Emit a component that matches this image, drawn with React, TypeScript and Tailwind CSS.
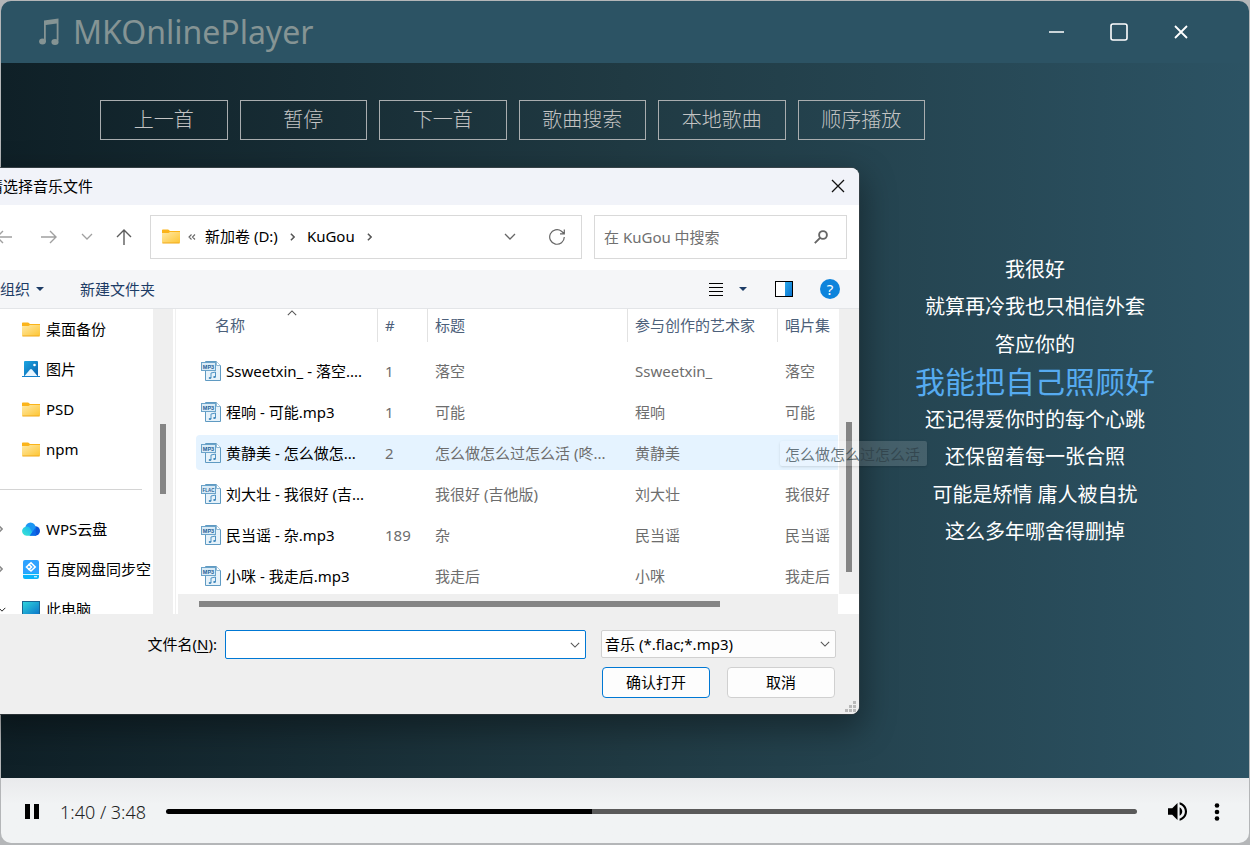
import { useState } from "react";
import type { ReactNode } from "react";

const controls = ["上一首", "暂停", "下一首", "歌曲搜索", "本地歌曲", "顺序播放"];

const lyrics = [
  "我很好",
  "就算再冷我也只相信外套",
  "答应你的",
  "我能把自己照顾好",
  "还记得爱你时的每个心跳",
  "还保留着每一张合照",
  "可能是矫情 庸人被自扰",
  "这么多年哪舍得删掉",
];
const currentLyric = 3;

const files = [
  { type: "MP3", name: "Ssweetxin_ - 落空....", no: "1", title: "落空", artist: "Ssweetxin_", album: "落空" },
  { type: "MP3", name: "程响 - 可能.mp3", no: "1", title: "可能", artist: "程响", album: "可能" },
  { type: "MP3", name: "黄静美 - 怎么做怎...", no: "2", title: "怎么做怎么过怎么活 (咚...", artist: "黄静美", album: "" },
  { type: "FLAC", name: "刘大壮 - 我很好 (吉...", no: "", title: "我很好 (吉他版)", artist: "刘大壮", album: "我很好" },
  { type: "MP3", name: "民当谣 - 杂.mp3", no: "189", title: "杂", artist: "民当谣", album: "民当谣" },
  { type: "MP3", name: "小咪 - 我走后.mp3", no: "", title: "我走后", artist: "小咪", album: "我走后" },
];
const hoveredFile = 2;

const duration = 228;

function formatTime(seconds: number) {
  return `${Math.floor(seconds / 60)}:${String(seconds % 60).padStart(2, "0")}`;
}

function Chevron({ className, d = "M1 1l5 5 5-5" }: { className?: string; d?: string }) {
  return (
    <svg viewBox="0 0 12 7" className={className} fill="none" stroke="currentColor" strokeWidth="1.3">
      <path d={d} />
    </svg>
  );
}

function ChevronRight({ className }: { className?: string }) {
  return (
    <svg viewBox="0 0 6 10" className={className} fill="none" stroke="currentColor" strokeWidth="1.9">
      <path d="M1 1l4 4-4 4" />
    </svg>
  );
}

function Caret() {
  return (
    <svg viewBox="0 0 8 4" className="h-1 w-2" fill="currentColor">
      <path d="M0 0h8L4 4z" />
    </svg>
  );
}

function Folder() {
  return (
    <svg viewBox="0 0 18 15" className="h-[15px] w-[18px] shrink-0">
      <defs>
        <linearGradient id="folder" x1="0" y1="0" x2="1" y2="1">
          <stop offset="0" stopColor="#ffe9a6" />
          <stop offset="1" stopColor="#fdc534" />
        </linearGradient>
      </defs>
      <path d="M0 1.2Q0 .5.8.5h5.4L8 2h10v3H0z" fill="#fbb41a" />
      <path d="M0 4h6.5L8 3h10v10.2q0 .8-.8.8H.8q-.8 0-.8-.8z" fill="url(#folder)" />
      <path d="M.4 14h17.2" stroke="#f0a818" />
    </svg>
  );
}

function Pictures() {
  return (
    <svg viewBox="0 0 18 16" className="h-4 w-[18px] shrink-0">
      <defs>
        <linearGradient id="pictures" x1="0" y1="0" x2="1" y2="1">
          <stop offset="0" stopColor="#1ba5e2" />
          <stop offset="1" stopColor="#0b62ad" />
        </linearGradient>
      </defs>
      <path d="M2 1q0-1 1-1h12q1 0 1 1v14H2z" fill="url(#pictures)" />
      <path d="M2.5 15L8 8.6q1-1 2 0L15.500 15z" fill="#e9f6ff" />
      <circle cx="12.500" cy="4" r="1.3" fill="#fff" />
      <path d="M0 15.500h18" stroke="#1480cc" />
    </svg>
  );
}

function Cloud() {
  return (
    <svg viewBox="0 0 19 14" className="h-[14px] w-[18px] shrink-0">
      <defs>
        <linearGradient id="cloudLeft" x1="0" y1="1" x2="1" y2="0">
          <stop offset="0" stopColor="#3be6d2" />
          <stop offset="1" stopColor="#15b0f5" />
        </linearGradient>
      </defs>
      <circle cx="14" cy="9" r="5" fill="#0b55d9" />
      <circle cx="9" cy="5.500" r="5.400" fill="#1c96f3" />
      <path d="M5 14a4.800 4.800 0 1 1 3-8.500L13 14z" fill="url(#cloudLeft)" />
      <path d="M8 14l6-8 1 8z" fill="#0b6be8" />
    </svg>
  );
}

function NetDisk() {
  return (
    <svg viewBox="0 0 16 19" className="mx-px h-[19px] w-4 shrink-0">
      <rect width="16" height="16" rx="2" fill="#2ea2ff" />
      <rect y="13" width="16" height="6" rx="2" fill="#0ab4fb" />
      <path d="M0 14.500h16" stroke="#d8f2ff" />
      <g fill="none" stroke="#fff" strokeWidth="1.600">
        <path d="M5.500 5L8 2.800 12.200 7 8 11 5.500 8.800" />
        <path d="M3.500 7L6 4.600 8.500 7 6 9.300z" />
      </g>
      <path d="M11 16.800h3" stroke="#fff" />
    </svg>
  );
}

function Computer() {
  return (
    <svg viewBox="0 0 18 16" className="h-4 w-[18px] shrink-0">
      <defs>
        <linearGradient id="computer" x1="0" y1="0" x2="1" y2="1">
          <stop offset="0" stopColor="#2fd6dd" />
          <stop offset="1" stopColor="#0b74c9" />
        </linearGradient>
      </defs>
      <rect x=".5" y=".5" width="17" height="13" fill="url(#computer)" stroke="#1a6591" />
      <path d="M5 15.500h8" stroke="#3d7fae" />
    </svg>
  );
}

function AudioFile({ type }: { type: string }) {
  return (
    <svg viewBox="0 0 20 20" className="size-5 shrink-0">
      <path d="M4.500.5h11l4 4v15h-15z" fill="#e6f2fa" stroke="#5f9ac2" />
      <path d="M15.500.5v4h4" fill="#fff" stroke="#8fb8d4" />
      <path d="M10 17v-5l4.500-1v5" fill="none" stroke="#4f93c4" />
      <ellipse cx="9" cy="17" rx="1.300" ry="1" fill="#3f86bb" />
      <ellipse cx="13.500" cy="16" rx="1.300" ry="1" fill="#3f86bb" />
      <rect x=".5" y="1.500" width="14" height="8" fill="#d9ebf7" stroke="#6ba3c9" />
      <text
        x="7.500"
        y="7.500"
        textAnchor="middle"
        fontSize={type === "FLAC" ? 4.5 : 5.5}
        fontWeight="700"
        fontFamily="Liberation Sans, sans-serif"
        fill="#1d5f96"
      >
        {type}
      </text>
    </svg>
  );
}

function SideItem({ icon, label, arrow }: { icon: ReactNode; label: string; arrow?: ReactNode }) {
  return (
    <li>
      <a href="#" className="flex h-10 items-center gap-1.5 overflow-hidden whitespace-nowrap">
        <span className="flex w-7 shrink-0 justify-start pl-2.5 text-[#8a8a8a]">{arrow}</span>
        {icon}
        <span className="text-black">{label}</span>
      </a>
    </li>
  );
}

function HeaderCell({ children, last }: { children: ReactNode; last?: boolean }) {
  return (
    <th className="h-[41px] p-0 align-top font-normal">
      <div className={`h-[33px] pl-[7px] leading-8 ${last ? "" : "border-r border-[#e2e2e2]"}`}>{children}</div>
    </th>
  );
}

function FileTable() {
  return (
    <table className="w-full table-fixed border-collapse text-left whitespace-nowrap">
      <colgroup>
        <col className="w-[182px]" />
        <col className="w-[50px]" />
        <col className="w-[200px]" />
        <col className="w-[150px]" />
        <col />
      </colgroup>
      <thead className="text-[#4c607a]">
        <tr>
          <th className="h-[41px] p-0 align-top font-normal" aria-sort="ascending">
            <div className="relative h-[33px] border-r border-[#e2e2e2] pl-[19px] leading-8">
              名称
              <Chevron d="M1 6l5-5 5 5" className="absolute top-px left-[91px] h-[6px] w-[10px] text-[#555]" />
            </div>
          </th>
          <HeaderCell>#</HeaderCell>
          <HeaderCell>标题</HeaderCell>
          <HeaderCell>参与创作的艺术家</HeaderCell>
          <HeaderCell last>唱片集</HeaderCell>
        </tr>
      </thead>
      <tbody className="text-[#6d6d6d]">
        {files.map((file, i) => {
          const bg = i === hoveredFile ? "bg-[#e5f3ff]" : "";
          const cell = `flex h-[35px] items-center overflow-hidden pl-[7px] ${bg}`;
          return (
            <tr key={file.name}>
              <td className="px-0 py-[3px]">
                <div className={`flex h-[35px] items-center gap-[5px] rounded-l-sm pl-[5px] text-black ${bg}`}>
                  <AudioFile type={file.type} />
                  {file.name}
                </div>
              </td>
              <td className="px-0 py-[3px]"><div className={cell}>{file.no}</div></td>
              <td className="px-0 py-[3px]"><div className={cell}>{file.title}</div></td>
              <td className="px-0 py-[3px]"><div className={cell}>{file.artist}</div></td>
              <td className="px-0 py-[3px]"><div className={cell}>{file.album}</div></td>
            </tr>
          );
        })}
      </tbody>
    </table>
  );
}

function FileDialog() {
  return (
    <div
      role="dialog"
      aria-label="请选择音乐文件"
      className="absolute top-[168px] -left-3 w-[871px] rounded-lg text-[15px] leading-5 shadow-[0_12px_32px_4px_rgba(0,0,0,0.36),0_0_0_1px_rgba(70,80,85,0.8)]"
    >
      <div className="overflow-hidden rounded-lg bg-white">
        <div className="flex h-[37px] items-center justify-between bg-[#f1f3f9] pr-[14px] pb-0.5 text-black">
          <h2>请选择音乐文件</h2>
          <button aria-label="关闭">
            <svg viewBox="0 0 14 14" className="size-[14px]" stroke="#111" strokeWidth="1.3">
              <path d="M1 1l12 12M13 1L1 13" />
            </svg>
          </button>
        </div>

        <div className="flex h-[65px] items-center pr-3 pb-0.5">
          <div className="flex w-[162px] items-center text-[#a0a0a0]">
            <button aria-label="后退" className="pl-2">
              <svg viewBox="0 0 16 14" className="h-[14px] w-4" fill="none" stroke="currentColor" strokeWidth="1.4">
                <path d="M16 7H1M7 1L1 7l6 6" />
              </svg>
            </button>
            <button aria-label="前进" className="pl-[29px]">
              <svg viewBox="0 0 16 14" className="h-[14px] w-4" fill="none" stroke="currentColor" strokeWidth="1.4">
                <path d="M0 7h15M9 1l6 6-6 6" />
              </svg>
            </button>
            <button aria-label="最近位置" className="pl-6">
              <Chevron className="h-[7px] w-3" />
            </button>
            <button aria-label="上移" className="pl-[23px] text-[#5c5c5c]">
              <svg viewBox="0 0 16 16" className="size-4" fill="none" stroke="currentColor" strokeWidth="1.4">
                <path d="M8 16V1M1 8l7-7 7 7" />
              </svg>
            </button>
          </div>
          <div className="flex h-11 flex-1 items-center border border-[#d9d9d9] pl-[11px] text-black">
            <Folder />
            <svg viewBox="0 0 8 6" className="ml-2 h-[6px] w-2" fill="none" stroke="#666" strokeWidth="1.1">
              <path d="M3.500.5L1 3l2.500 2.500M7 .5L4.500 3 7 5.500" />
            </svg>
            <button className="ml-[9px] pb-0.5">新加卷 (D:)</button>
            <ChevronRight className="ml-3 h-2 w-[5px] text-[#555]" />
            <button className="ml-3 pb-0.5">KuGou</button>
            <ChevronRight className="ml-3 h-2 w-[5px] text-[#555]" />
            <button aria-label="展开" className="ml-auto text-[#666]">
              <Chevron className="h-[7px] w-3" />
            </button>
            <button aria-label="刷新" className="mr-4 ml-[33px] text-[#666]">
              <svg viewBox="0 0 16 16" className="size-4" fill="none" stroke="currentColor" strokeWidth="1.2">
                <path d="M15.300 8A7.300 7.300 0 1 1 12.500 2.200L15 4.500M15.300.5v4.300h-4.300" />
              </svg>
            </button>
          </div>
          <div className="ml-3 flex h-11 w-[253px] items-center justify-between border border-[#d9d9d9] pr-[18px] pl-[9px]">
            <input
              type="search"
              aria-label="搜索"
              placeholder="在 KuGou 中搜索"
              className="w-44 outline-none placeholder:text-[#707070]"
            />
            <svg viewBox="0 0 14 14" className="size-[14px]" fill="none" stroke="#666" strokeWidth="1.9">
              <circle cx="9" cy="5" r="3.900" />
              <path d="M6.300 7.700L.8 13.200" />
            </svg>
          </div>
        </div>

        <div className="flex h-[39px] items-center border-b border-[#e3e5e8] bg-[#f5f6f8] pr-[19px] pl-3 text-[#1d3c66]">
          <button className="flex items-center gap-1.5">组织 <Caret /></button>
          <button className="ml-9">新建文件夹</button>
          <button aria-label="视图" className="ml-auto">
            <svg viewBox="0 0 14 14" className="h-[14px] w-[14px]" stroke="#000">
              <path d="M0 1.500h14M0 5.500h14M0 9.500h14M0 13.500h14" />
            </svg>
          </button>
          <button aria-label="更多视图" className="ml-4"><Caret /></button>
          <button aria-label="预览窗格" className="ml-7">
            <svg viewBox="0 0 18 16" className="h-4 w-[18px]">
              <defs>
                <linearGradient id="pane" x1="0" y1="0" x2="1" y2="1">
                  <stop offset="0" stopColor="#2ba8ea" />
                  <stop offset="1" stopColor="#0a74d0" />
                </linearGradient>
              </defs>
              <rect x=".5" y=".5" width="17" height="15" fill="#fff" stroke="#000" />
              <rect x="10" y="1" width="7" height="14" fill="url(#pane)" />
            </svg>
          </button>
          <button
            aria-label="帮助"
            className="ml-[27px] flex size-5 items-center justify-center rounded-full bg-[#0d84dc] text-[15px] text-white"
          >
            ?
          </button>
        </div>

        <div className="flex h-[305px]">
          <nav className="flex w-[165px] overflow-hidden">
            <ul className="w-[163px] overflow-hidden">
              <SideItem icon={<Folder />} label="桌面备份" />
              <SideItem icon={<Pictures />} label="图片" />
              <SideItem icon={<Folder />} label="PSD" />
              <SideItem icon={<Folder />} label="npm" />
              <li className="flex h-10 items-center pr-[9px]">
                <hr className="w-full border-[#d4d4d4]" />
              </li>
              <SideItem icon={<Cloud />} label="WPS云盘" arrow={<ChevronRight className="h-2 w-[5px]" />} />
              <SideItem icon={<NetDisk />} label="百度网盘同步空" arrow={<ChevronRight className="h-2 w-[5px]" />} />
              <SideItem icon={<Computer />} label="此电脑" arrow={<Chevron className="h-[5px] w-2 text-black" />} />
            </ul>
          </nav>
          <div className="flex w-5 justify-center bg-[#efefef] pt-[115px]">
            <div className="h-[70px] w-1.5 bg-[#858585]" />
          </div>
          <div className="w-[3px] border-r border-[#f0f0f0]" />
          <div className="ml-0.5 min-w-0 flex-1">
            <div className="flex h-[285px] overflow-hidden">
              <div className="min-w-0 flex-1 pl-[18px]">
                <FileTable />
              </div>
              <div className="ml-px flex w-5 justify-center bg-[#efefef] pt-[113px]">
                <div className="h-[150px] w-1.5 bg-[#858585]" />
              </div>
            </div>
            <div className="mr-[21px] flex h-5 items-center bg-[#efefef] pl-[21px]">
              <div className="h-1.5 w-[521px] bg-[#858585]" />
            </div>
          </div>
        </div>

        <form className="h-[100px] bg-[#efefef] pt-4 pr-[23px] text-black" onSubmit={(e) => e.preventDefault()}>
          <div className="flex items-start justify-end">
            <label htmlFor="filename" className="pt-1">
              文件名(<u className="underline-offset-2">N</u>):
            </label>
            <div className="ml-2 flex h-[29px] w-[361px] items-center rounded-[2px] border border-[#0078d4] bg-white pr-[5px]">
              <input id="filename" type="text" className="min-w-0 flex-1 px-1 outline-none" />
              <Chevron className="h-[6px] w-[10px] text-[#555]" />
            </div>
            <div className="ml-[15px] flex h-7 w-[235px] items-center rounded-[2px] border border-[#d0d0d0] bg-[#fdfdfd] pr-[5px]">
              <select aria-label="文件类型" className="min-w-0 flex-1 appearance-none pl-[3px] outline-none">
                <option>音乐 (*.flac;*.mp3)</option>
              </select>
              <Chevron className="h-[6px] w-[10px] text-[#555]" />
            </div>
          </div>
          <div className="mt-2 flex justify-end gap-[17px] pr-px">
            <button type="submit" className="h-[31px] w-[108px] rounded-sm border border-[#0078d4] bg-[#fdfdfd] pb-0.5">
              确认打开
            </button>
            <button type="button" className="h-[31px] w-[108px] rounded-sm border border-[#d0d0d0] bg-[#fdfdfd] pb-0.5">
              取消
            </button>
          </div>
        </form>
      </div>

      {/* resize grip */}
      <svg viewBox="0 0 11 11" className="absolute right-[3px] bottom-0.5 size-[11px]" fill="#b9b9b9">
        <path d="M8 0h3v3H8zM4 4h3v3H4zM8 4h3v3H8zM0 8h3v3H0zM4 8h3v3H4zM8 8h3v3H8z" />
      </svg>

      <div
        role="tooltip"
        className="absolute top-[273px] left-[792px] flex h-[25px] items-center rounded-[2px] bg-white/15 pr-[7px] pl-[5px] whitespace-nowrap text-[#2c3c44]/70 shadow-sm"
      >
        怎么做怎么过怎么活
      </div>
    </div>
  );
}

function Player() {
  const [time, setTime] = useState(100);
  const played = (time / duration) * 100;

  return (
    <footer className="flex h-[65px] items-center bg-linear-to-b from-[#e9eaec] to-[#f1f3f4] to-40% pt-0.5 pr-[29px] pl-6">
      <button aria-label="暂停">
        <svg viewBox="0 0 14 15" className="h-[15px] w-[14px]">
          <path d="M0 0h5v15H0zM9 0h5v15H9z" />
        </svg>
      </button>
      <span className="w-[107px] pl-[21px] text-lg font-light whitespace-nowrap text-[#222]">
        {formatTime(time)} / {formatTime(duration)}
      </span>
      <input
        type="range"
        aria-label="播放进度"
        min={0}
        max={duration}
        value={time}
        onChange={(e) => setTime(Number(e.target.value))}
        className="ml-5 h-[5px] min-w-0 flex-1 appearance-none rounded-full [&::-webkit-slider-thumb]:size-0 [&::-webkit-slider-thumb]:appearance-none"
        style={{ background: `linear-gradient(to right, #000 ${played}%, #5a5a5a ${played}%)` }}
      />
      <button aria-label="音量" className="ml-[31px]">
        <svg viewBox="3 3 18 18" className="size-[19px]">
          <path d="M3 9v6h4l5 5V4L7 9H3zm13.500 3c0-1.770-1.020-3.290-2.500-4.030v8.050c1.480-.730 2.500-2.250 2.500-4.020zM14 3.230v2.060c2.890.860 5 3.540 5 6.710s-2.110 5.850-5 6.710v2.060c4.010-.910 7-4.490 7-8.770s-2.990-7.860-7-8.770z" />
        </svg>
      </button>
      <button aria-label="更多" className="ml-[27px]">
        <svg viewBox="0 0 6 18" className="h-[18px] w-1.5">
          <circle cx="3" cy="2.500" r="2.300" />
          <circle cx="3" cy="9" r="2.300" />
          <circle cx="3" cy="15.500" r="2.300" />
        </svg>
      </button>
    </footer>
  );
}

export default function App() {
  return (
    <div className="relative flex min-h-screen flex-col overflow-hidden bg-[#b4b6b8] px-px pt-px pb-0.5 font-['Noto_Sans','Noto_Sans_CJK_SC',sans-serif]">
      <div className="flex flex-1 flex-col overflow-hidden rounded-[10px]">
        <header className="flex h-[62px] items-center justify-between bg-[#2c5364] pr-[60px] pl-[37px]">
          <h1 className="flex items-center text-[32px] leading-10 text-[#859494]">
            <svg viewBox="0 0 22 28" className="mr-[13px] h-7 w-[22px]" fill="currentColor">
              <path d="M6 2.500L20.500.5v22h-1.800V5.500L7.800 7v17H6z" />
              <ellipse cx="4.500" cy="23.500" rx="3.400" ry="2.900" />
              <ellipse cx="17" cy="24" rx="3.600" ry="3" />
            </svg>
            MKOnlinePlayer
          </h1>
          <div className="flex items-center gap-[45px]">
            <button aria-label="最小化">
              <svg viewBox="0 0 16 16" className="size-4" stroke="#fff" strokeWidth="1.600">
                <path d="M0 8h15" />
              </svg>
            </button>
            <button aria-label="最大化">
              <svg viewBox="0 0 18 18" className="size-[18px]" fill="none" stroke="#fff" strokeWidth="1.600">
                <rect x="1" y="1" width="16" height="16" rx="2" />
              </svg>
            </button>
            <button aria-label="关闭">
              <svg viewBox="0 0 16 16" className="size-4" stroke="#fff" strokeWidth="1.800">
                <path d="M2 2l12 12M14 2L2 14" />
              </svg>
            </button>
          </div>
        </header>

        <main className="flex flex-1 flex-col bg-linear-to-r from-[#0f2027] via-[#203a43] to-[#2c5364]">
          <div className="ml-[99px] grid max-w-[825px] grid-cols-6 gap-x-3 pt-[37px]">
            {controls.map((label) => (
              <button key={label} className="h-10 border border-[#a9adaf] text-xl font-light text-[#c4c4c4]">
                {label}
              </button>
            ))}
          </div>
          <div className="mt-[111px] flex justify-end pr-[54px]">
            <ul className="grid h-[300px] w-80 grid-rows-8 text-center text-xl text-white">
              {lyrics.map((line, i) => (
                <li
                  key={line}
                  className={
                    i === currentLyric
                      ? "flex items-center justify-center text-3xl text-[#56abf0]"
                      : "flex items-center justify-center"
                  }
                >
                  {line}
                </li>
              ))}
            </ul>
          </div>
        </main>

        <Player />
      </div>

      <FileDialog />
    </div>
  );
}
